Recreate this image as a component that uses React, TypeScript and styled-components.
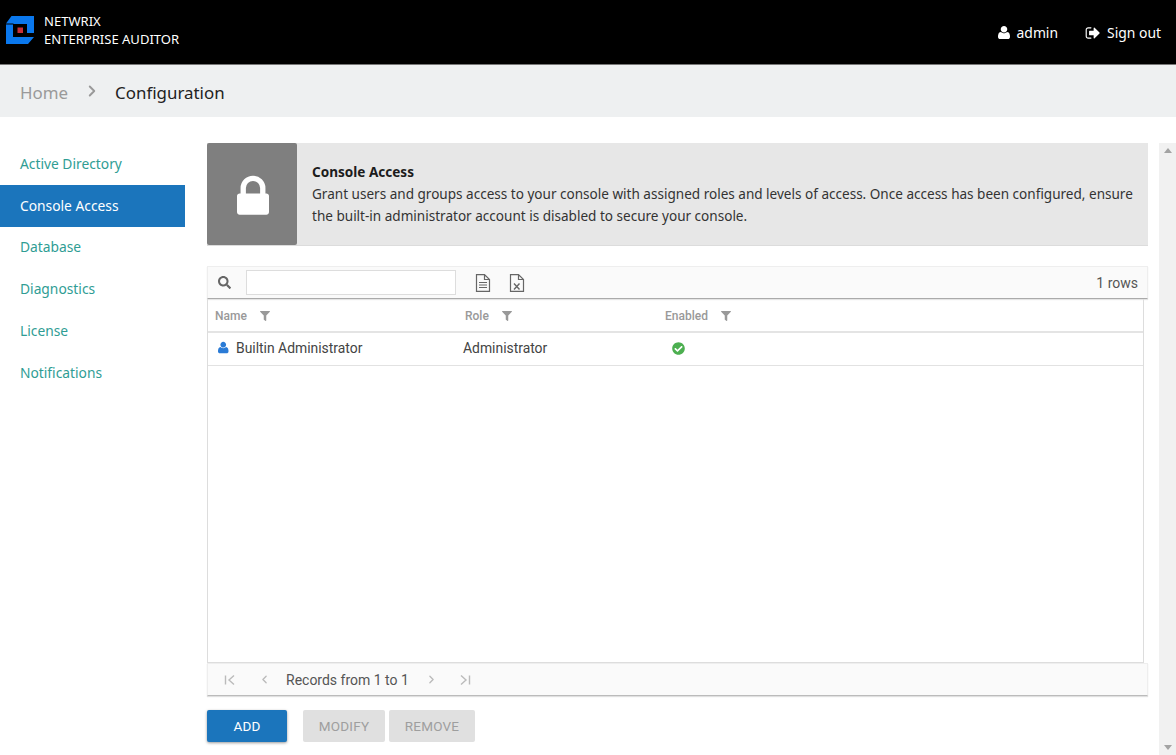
import React from "react";
import styled, { createGlobalStyle } from "styled-components";
import { FaFilter, FaSearch, FaCheckCircle } from "react-icons/fa";
import { ChevronRight, ChevronLeft } from "lucide-react";

const Global = createGlobalStyle`
  html, body { margin: 0; padding: 0; height: 100%; background: #fff; overflow: hidden; }
  * { box-sizing: border-box; }
  #root { height: 755px; width: 1176px; font-family: "Noto Sans", "Open Sans", sans-serif; }
`;
const Page = styled.div`height:755px;display:flex;flex-direction:column;`;
const Header = styled.header`
  height:65px;flex:none;background:#000;color:#fff;display:flex;align-items:center;justify-content:space-between;
  padding:0 15px 1px 6px;border-bottom:1px solid #777;position:relative;z-index:1;
`;
const Brand = styled.div`display:flex;align-items:center;gap:10px;`;
const BrandText = styled.div`font-size:13.05px;line-height:18px;margin-top:-4px;`;
const UserBar = styled.div`display:flex;align-items:center;gap:27px;font-size:13.9px;padding-top:2px;`;
const UserItem = styled.span`display:flex;align-items:center;gap:7px;`;
const Crumbs = styled.nav`
  height:52px;flex:none;background:#eef0f1;display:flex;align-items:center;padding:2px 20px 0;font-size:16.9px;
`;
const CrumbHome = styled.span`color:#9a9a9a;`;
const CrumbSep = styled.span`display:flex;margin:-2px 14px 0 15px;color:#999;`;
const CrumbCurrent = styled.span`color:#222;`;
const Body = styled.div`flex:1;display:flex;min-height:0;`;
const Side = styled.aside`width:185px;flex:none;padding-top:26px;font-size:13.8px;`;
const SideItem = styled.div<{ $active?: boolean }>`
  height:41.8px;display:flex;align-items:center;padding:0 0 1px 20px;
  color:${p => (p.$active ? "#fff" : "#2f9d94")};
  background:${p => (p.$active ? "#1b75bc" : "transparent")};
`;
const Main = styled.main`flex:1;display:flex;flex-direction:column;padding:26px 11px 0 22px;min-width:0;`;
const Banner = styled.section`height:103px;flex:none;background:#e7e7e7;display:flex;border-bottom:1px solid #dcdcdc;`;
const BannerIcon = styled.div`width:90px;flex:none;background:#7f7f7f;color:#fff;display:flex;align-items:center;justify-content:center;border-radius:2px;padding:5px 0 0 1px;`;
const BannerText = styled.div`padding:18px 12px 0 15px;font-size:13.55px;line-height:22px;color:#333;`;
const BannerTitle = styled.div`font-weight:700;color:#1c1c1c;font-size:13.55px;`;
const Toolbar = styled.div`
  margin-top:20px;height:33px;flex:none;background:#fafafa;border:1px solid #eee;border-bottom:1px solid #aaa;
  display:flex;align-items:center;padding:0 9px 0 10px;font-family:Roboto,sans-serif;font-size:14px;color:#555;
  box-shadow:0 1px 1px rgba(0,0,0,.1);
`;
const SearchBox = styled.input`width:210px;height:25px;margin:0 18px 0 15px;border:1px solid #ddd;background:#fff;`;
const ToolIcon = styled.svg`margin-right:17px;display:block;`;
const RowCount = styled.span`margin-left:auto;`;
const Grid = styled.div`flex:1;min-height:0;width:937px;border:1px solid #ddd;border-top:none;font-family:Roboto,sans-serif;`;
const Cols = styled.div<{ $head?: boolean }>`
  display:grid;grid-template-columns:250px 200px 1fr;align-items:center;
  height:${p => (p.$head ? "34px" : "33px")};
  border-bottom:${p => (p.$head ? "2px solid #e4e4e4" : "1px solid #e2e2e2")};
  font-size:${p => (p.$head ? "12px" : "13.9px")};
  color:${p => (p.$head ? "#999" : "#444")};
  font-weight:${p => (p.$head ? 500 : 400)};
`;
const HeadCell = styled.div`display:flex;align-items:center;gap:13px;padding:1px 0 0 7px;color:#999;`;
const Cell = styled.div`display:flex;align-items:center;gap:7.5px;padding:0 0 2px 10px;`;
const RoleCell = styled(Cell)`padding-left:5px;`;
const EnabledCell = styled(Cell)`padding-left:14px;`;
const Pager = styled.div`
  height:33px;flex:none;background:#fafafa;border:1px solid #eee;border-bottom:1px solid #bbb;display:flex;align-items:center;
  padding-left:16px;font-family:Roboto,sans-serif;font-size:14px;color:#555;box-shadow:0 1px 1px rgba(0,0,0,.12);
`;
const PagerIcon = styled.span<{ $gap: number; $lead?: number }>`display:flex;color:#bbb;margin:0 ${p => p.$gap}px 0 ${p => p.$lead ?? 0}px;`;
const Actions = styled.div`display:flex;flex:none;margin:14px 0 13px;font-family:Roboto,sans-serif;font-size:13.5px;`;
const Btn = styled.button<{ $primary?: boolean; $w: number; $ml?: number }>`
  width:${p => p.$w}px;height:32px;margin-left:${p => p.$ml ?? 0}px;border:none;border-radius:2px;font:inherit;letter-spacing:.2px;
  background:${p => (p.$primary ? "#1b75bc" : "#e0e0e0")};color:${p => (p.$primary ? "#fff" : "#9e9e9e")};
  box-shadow:${p => (p.$primary ? "0 1px 3px rgba(0,0,0,.4)" : "none")};padding:0;
`;
const Scroll = styled.div`width:17px;flex:none;margin-top:26px;background:#f1f1f1;display:flex;flex-direction:column;justify-content:space-between;align-items:center;padding:5px 0;`;
const Arrow = styled.i<{ $up?: boolean }>`
  width:0;height:0;border-left:4px solid transparent;border-right:4px solid transparent;
  ${p => (p.$up ? "border-bottom:5px solid #a3a3a3;" : "border-top:5px solid #a3a3a3;")}
`;

const USER = "M1408 1393q0 120-73 189.5t-194 69.5h-874q-121 0-194-69.5t-73-189.5q0-53 3.5-103.5t14-109 26.5-108.5 43-97.5 62-81 85.5-53.5 111.5-20q9 0 42 21.5t74.5 48 108 48 133.5 21.5 133.5-21.5 108-48 74.5-48 42-21.5q61 0 111.5 20t85.5 53.5 62 81 43 97.5 26.5 108.5 14 109 3.5 103.5zm-320-893q0 159-112.5 271.5t-271.5 112.5-271.5-112.5-112.5-271.5 112.5-271.5 271.5-112.5 271.5 112.5 112.5 271.5z";
const SIGNOUT = "M704 1440q0 4 1 20t.5 26.5-3 23.5-10 19.5-20.5 6.5h-320q-119 0-203.5-84.5t-84.5-203.5v-704q0-119 84.5-203.5t203.5-84.5h320q13 0 22.5 9.5t9.5 22.5q0 4 1 20t.5 26.5-3 23.5-10 19.5-20.5 6.5h-320q-66 0-113 47t-47 113v704q0 66 47 113t113 47h312l11.5 1 11.5 3 8 5.5 7 9 2 13.5zm928-544q0 26-19 45l-544 544q-19 19-45 19t-45-19-19-45v-288h-448q-26 0-45-19t-19-45v-384q0-26 19-45t45-19h448v-288q0-26 19-45t45-19 45 19l544 544q19 19 19 45z";
const LOCK = "M320 768h512v-192q0-106-75-181t-181-75-181 75-75 181v192zm832 96v576q0 40-28 68t-68 28h-960q-40 0-68-28t-28-68v-576q0-40 28-68t68-28h32v-192q0-184 132-316t316-132 316 132 132 316v192h32q40 0 68 28t28 68z";

const UserIcon = ({ w, color }: { w: number; color: string }) => (
  <svg width={w} height={(w * 1792) / 1408} viewBox="0 0 1408 1792" fill={color}><path d={USER} /></svg>
);
const Logo = () => (
  <svg width="28" height="28" viewBox="0 0 28 28" style={{ marginTop: -4 }}>
    <path d="M5.5 0H28V17H21V8H7.5V7.5H0Z" fill="#0a78ee" />
    <path d="M0 8.5H7V21H28L22 28H0Z" fill="#0a78ee" />
    <rect x="11.5" y="11.5" width="5.5" height="5.5" fill="#c8303a" />
  </svg>
);
const DocIcon = ({ x }: { x?: boolean }) => (
  <ToolIcon width="17" height="18" viewBox="0 0 17 18" fill="none" stroke="#666" strokeWidth="1.2">
    <path d="M2.5 .6H10.5L15.5 5.5V17.4H2.5Z M10.5 .6V5.5H15.5" />
    {x ? (
      <path d="M6 9.5L11.5 15.5M11.5 9.5L6 15.5" strokeWidth="1.4" />
    ) : (
      <path d="M5 8.5H13M5 11H13M5 13.5H13" />
    )}
  </ToolIcon>
);
const EdgeIcon = ({ flip }: { flip?: boolean }) => (
  <svg width="12" height="12" viewBox="0 0 12 12" fill="none" stroke="currentColor" strokeWidth="1.4" style={flip ? { transform: "scaleX(-1)" } : undefined}>
    <path d="M1.5 1.5V10.5M10 1.5L5 6L10 10.5" />
  </svg>
);

const items = ["Active Directory", "Console Access", "Database", "Diagnostics", "License", "Notifications"];

export default function App() {
  return (
    <Page>
      <Global />
      <Header>
        <Brand>
          <Logo />
          <BrandText>NETWRIX<br />ENTERPRISE AUDITOR</BrandText>
        </Brand>
        <UserBar>
          <UserItem><UserIcon w={12} color="#fff" />admin</UserItem>
          <UserItem><svg width="15" height="16" viewBox="0 0 1664 1792" fill="#fff"><path d={SIGNOUT} /></svg>Sign out</UserItem>
        </UserBar>
      </Header>
      <Crumbs>
        <CrumbHome>Home</CrumbHome>
        <CrumbSep><ChevronRight size={18} strokeWidth={2.5} /></CrumbSep>
        <CrumbCurrent>Configuration</CrumbCurrent>
      </Crumbs>
      <Body>
        <Side>
          {items.map(i => <SideItem key={i} $active={i === "Console Access"}>{i}</SideItem>)}
        </Side>
        <Main>
          <Banner>
            <BannerIcon><svg width="32" height="50" viewBox="0 0 1152 1792" fill="#fff"><path d={LOCK} /></svg></BannerIcon>
            <BannerText>
              <BannerTitle>Console Access</BannerTitle>
              Grant users and groups access to your console with assigned roles and levels of access. Once access has been configured, ensure the built-in administrator account is disabled to secure your console.
            </BannerText>
          </Banner>
          <Toolbar>
            <FaSearch size={13} color="#666" />
            <SearchBox aria-label="Search" />
            <DocIcon />
            <DocIcon x />
            <RowCount>1 rows</RowCount>
          </Toolbar>
          <Grid>
            <Cols $head>
              <HeadCell>Name <FaFilter size={10} /></HeadCell>
              <HeadCell>Role <FaFilter size={10} /></HeadCell>
              <HeadCell>Enabled <FaFilter size={10} /></HeadCell>
            </Cols>
            <Cols>
              <Cell><UserIcon w={10.5} color="#2a7bd6" />Builtin Administrator</Cell>
              <RoleCell>Administrator</RoleCell>
              <EnabledCell><FaCheckCircle size={13} color="#4caf50" /></EnabledCell>
            </Cols>
          </Grid>
          <Pager>
            <PagerIcon $gap={22}><EdgeIcon /></PagerIcon>
            <PagerIcon $gap={15}><ChevronLeft size={13} strokeWidth={2.5} /></PagerIcon>
            <span>Records from 1 to 1</span>
            <PagerIcon $gap={21} $lead={16}><ChevronRight size={13} strokeWidth={2.5} /></PagerIcon>
            <PagerIcon $gap={0}><EdgeIcon flip /></PagerIcon>
          </Pager>
          <Actions>
            <Btn $primary $w={80}>ADD</Btn>
            <Btn $w={82} $ml={16}>MODIFY</Btn>
            <Btn $w={86} $ml={4}>REMOVE</Btn>
          </Actions>
        </Main>
        <Scroll><Arrow $up /><Arrow /></Scroll>
      </Body>
    </Page>
  );
}
